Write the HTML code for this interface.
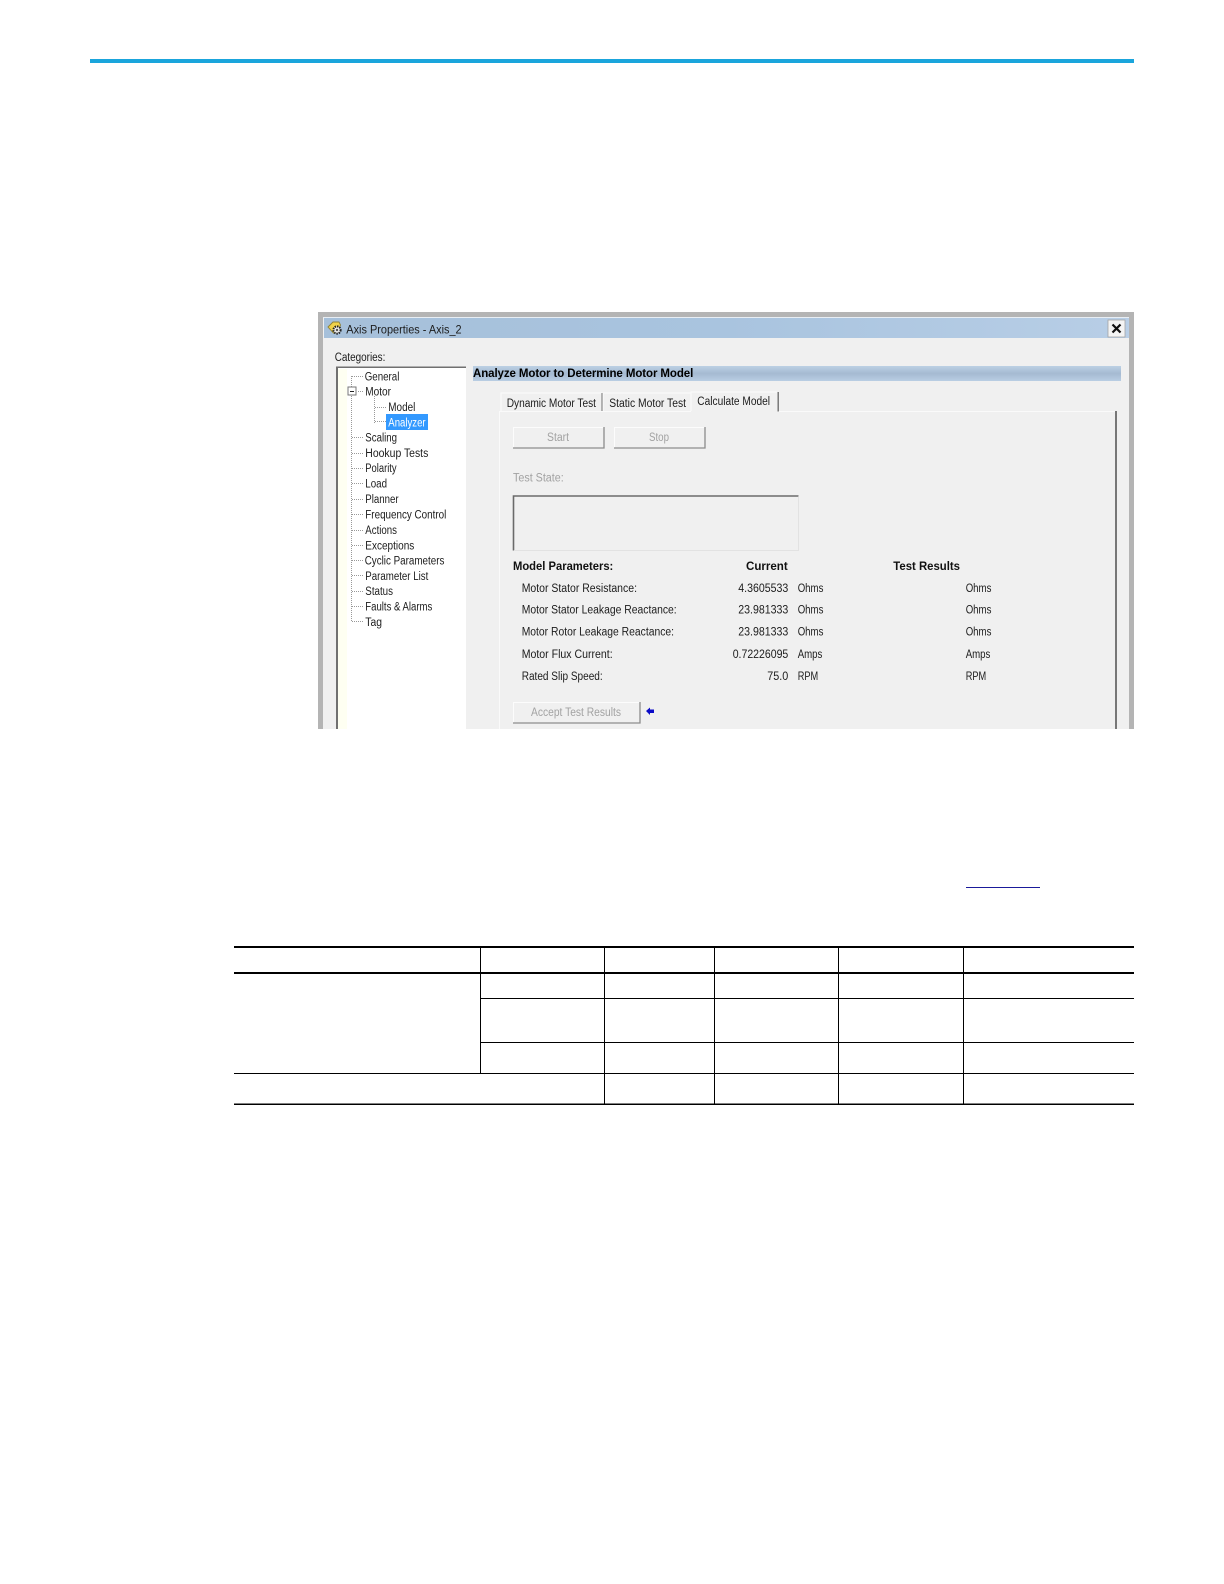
<!DOCTYPE html>
<html lang="en">
<head>
<meta charset="utf-8">
<title>Axis Properties</title>
<style>
html,body{margin:0;padding:0;background:#fff;}
body{width:1224px;height:1584px;overflow:hidden;position:relative;}
svg{position:absolute;left:0;top:0;}
text{font-family:"Liberation Sans",Arial,sans-serif;font-size:11.5px;fill:#1c1c1c;}
.b{font-weight:bold;fill:#111;}
.g{fill:#a2a2a2;}
</style>
</head>
<body>
<svg width="1224" height="1584" viewBox="0 0 1224 1584" xmlns="http://www.w3.org/2000/svg">
<defs>
<linearGradient id="tb" x1="0" x2="1" y1="0" y2="0">
<stop offset="0" stop-color="#a6c0da"/><stop offset="0.5" stop-color="#a9c4df"/><stop offset="1" stop-color="#b8cee6"/>
</linearGradient>
<linearGradient id="hb" x1="0" x2="0" y1="0" y2="1">
<stop offset="0" stop-color="#bcd0e4"/><stop offset="0.5" stop-color="#a5bad2"/><stop offset="1" stop-color="#b9cee3"/>
</linearGradient>
</defs>

<!-- top rule -->
<rect x="90" y="59" width="1044" height="4" fill="#1aa5dc"/>

<!-- dialog frame -->
<rect x="318" y="312" width="816" height="417" fill="#b4b4b4"/>
<rect x="323" y="317" width="806" height="412" fill="#f0f0f0"/>
<rect x="324" y="318" width="805" height="20" fill="url(#tb)"/>
<rect x="323" y="317" width="806" height="1" fill="#e8eef4"/>

<!-- title icon -->
<path d="M328 327l5-5h6l1.500 3-3 8h-4z" fill="#f0d24a" stroke="#8f8238" stroke-width="0.9"/>
<circle cx="337" cy="330" r="3.600" fill="#eeeeee" stroke="#222" stroke-width="2" stroke-dasharray="1.500 0.900"/>
<circle cx="337" cy="330" r="1.200" fill="#555"/>
<text x="346.300" y="333.500" style="font-size:12px" textLength="115.300" lengthAdjust="spacingAndGlyphs">Axis Properties - Axis_2</text>

<!-- close button -->
<rect x="1108" y="320" width="17" height="17" fill="#f4f4f4" stroke="#a4a4a4" stroke-width="0.8"/>
<path d="M1112.500 324.500l8 8M1120.500 324.500l-8 8" stroke="#111" stroke-width="2.200" fill="none"/>

<text x="334.700" y="361" textLength="50.700" lengthAdjust="spacingAndGlyphs">Categories:</text>

<!-- tree panel -->
<rect x="336" y="367" width="130" height="362" fill="#fff"/>
<rect x="338" y="369" width="9" height="360" fill="#fefff2"/>
<rect x="336" y="366.500" width="130" height="1.500" fill="#707070"/>
<rect x="336" y="367" width="2" height="362" fill="#707070"/>

<!-- tree lines -->
<g stroke="#999" stroke-width="1" stroke-dasharray="1 1" fill="none">
<path d="M351.500 376v246"/>
<path d="M352 376.500h12M358 391.500h6M352 437.500h12M352 453.500h12M352 468.500h12M352 483.500h12M352 499.500h12M352 514.500h12M352 530.500h12M352 545.500h12M352 560.500h12M352 575.500h12M352 591.500h12M352 606.500h12M352 621.500h12"/>
<path d="M374.500 396v27M375 407.500h11M375 421.500h11"/>
</g>
<rect x="348" y="387" width="8" height="8" fill="#fff" stroke="#777" stroke-width="1"/>
<path d="M350 391.500h4" stroke="#222" stroke-width="1"/>

<!-- tree labels -->
<text x="364.700" y="380.300" textLength="34.700" lengthAdjust="spacingAndGlyphs">General</text>
<text x="365.300" y="395.300" textLength="25.700" lengthAdjust="spacingAndGlyphs">Motor</text>
<text x="388.300" y="410.800" textLength="27" lengthAdjust="spacingAndGlyphs">Model</text>
<rect x="386" y="414" width="42" height="16" fill="#3399ff"/>
<text x="388.300" y="426.300" textLength="37.300" lengthAdjust="spacingAndGlyphs" style="fill:#fff">Analyzer</text>
<text x="365.300" y="441.300" textLength="31.700" lengthAdjust="spacingAndGlyphs">Scaling</text>
<text x="365.300" y="457" textLength="63" lengthAdjust="spacingAndGlyphs">Hookup Tests</text>
<text x="365.300" y="472" textLength="31.300" lengthAdjust="spacingAndGlyphs">Polarity</text>
<text x="365.300" y="487.300" textLength="21.700" lengthAdjust="spacingAndGlyphs">Load</text>
<text x="365.300" y="503" textLength="33.300" lengthAdjust="spacingAndGlyphs">Planner</text>
<text x="365.300" y="518.300" textLength="81" lengthAdjust="spacingAndGlyphs">Frequency Control</text>
<text x="365.300" y="534" textLength="31.700" lengthAdjust="spacingAndGlyphs">Actions</text>
<text x="365.300" y="549.300" textLength="49" lengthAdjust="spacingAndGlyphs">Exceptions</text>
<text x="364.700" y="564.300" textLength="79.700" lengthAdjust="spacingAndGlyphs">Cyclic Parameters</text>
<text x="365.300" y="580" textLength="63" lengthAdjust="spacingAndGlyphs">Parameter List</text>
<text x="365.300" y="595" textLength="27.700" lengthAdjust="spacingAndGlyphs">Status</text>
<text x="365.300" y="610.300" textLength="67" lengthAdjust="spacingAndGlyphs">Faults &amp; Alarms</text>
<text x="365.300" y="625.800" textLength="16.700" lengthAdjust="spacingAndGlyphs">Tag</text>

<!-- heading bar -->
<rect x="473" y="366" width="648" height="15" fill="url(#hb)"/>
<text class="b" x="473" y="377" textLength="220.300" lengthAdjust="spacing" style="fill:#000">Analyze Motor to Determine Motor Model</text>

<!-- tabs -->
<rect x="499" y="411" width="1" height="318" fill="#fafafa"/>
<rect x="499" y="411" width="617" height="1" fill="#fafafa"/>
<rect x="1115" y="411" width="2" height="318" fill="#777"/>
<path d="M501 411v-18h101" stroke="#fbfbfb" fill="none"/>
<rect x="601.500" y="393" width="1.200" height="18" fill="#707070"/>
<path d="M603 411v-18h88" stroke="#fbfbfb" fill="none"/>
<rect x="691" y="391.500" width="87" height="20.500" fill="#f0f0f0"/>
<path d="M691 411v-19h86" stroke="#fbfbfb" fill="none"/>
<rect x="777.500" y="392" width="1.400" height="19.500" fill="#707070"/>
<text x="506.700" y="407" textLength="89.300" lengthAdjust="spacingAndGlyphs">Dynamic Motor Test</text>
<text x="609.300" y="407" textLength="76.700" lengthAdjust="spacingAndGlyphs">Static Motor Test</text>
<text x="697.300" y="405" textLength="72.700" lengthAdjust="spacingAndGlyphs">Calculate Model</text>

<!-- buttons -->
<g fill="none">
<path d="M513.500 448v-20.500h90" stroke="#fcfcfc"/>
<path d="M513 448h91v-21" stroke="#8c8c8c" stroke-width="1.300"/>
<path d="M614.500 448v-20.500h90" stroke="#fcfcfc"/>
<path d="M614 448h91v-21" stroke="#8c8c8c" stroke-width="1.300"/>
<path d="M513.500 723v-20.500h126" stroke="#fcfcfc"/>
<path d="M513 723h127v-21" stroke="#8c8c8c" stroke-width="1.300"/>
</g>
<text class="g" x="547" y="441" textLength="22" lengthAdjust="spacingAndGlyphs">Start</text>
<text class="g" x="649" y="441" textLength="20" lengthAdjust="spacingAndGlyphs">Stop</text>
<text class="g" x="531" y="716" textLength="90" lengthAdjust="spacingAndGlyphs">Accept Test Results</text>
<path d="M646 711l4-3.500v2h4v3.500h-4v2z" fill="#0a0ac8"/>

<text class="g" x="513" y="481.500" textLength="50.700" lengthAdjust="spacingAndGlyphs">Test State:</text>

<!-- state box -->
<path d="M798.500 496h-285v54.500" stroke="#6a6a6a" stroke-width="1.600" fill="none"/>
<path d="M514 550.500h284.500v-54" stroke="#e2e2e2" stroke-width="1" fill="none"/>

<!-- parameter table -->
<text class="b" x="513" y="570" textLength="100.300" lengthAdjust="spacingAndGlyphs">Model Parameters:</text>
<text class="b" x="746" y="570" textLength="41.700" lengthAdjust="spacingAndGlyphs">Current</text>
<text class="b" x="893.300" y="570" textLength="66.700" lengthAdjust="spacingAndGlyphs">Test Results</text>

<text x="521.700" y="592" textLength="115.300" lengthAdjust="spacingAndGlyphs">Motor Stator Resistance:</text>
<text x="521.700" y="613.700" textLength="155" lengthAdjust="spacingAndGlyphs">Motor Stator Leakage Reactance:</text>
<text x="521.700" y="635.700" textLength="152.300" lengthAdjust="spacingAndGlyphs">Motor Rotor Leakage Reactance:</text>
<text x="521.700" y="658" textLength="91" lengthAdjust="spacingAndGlyphs">Motor Flux Current:</text>
<text x="521.700" y="680" textLength="81" lengthAdjust="spacingAndGlyphs">Rated Slip Speed:</text>

<text x="738.300" y="592" textLength="50" lengthAdjust="spacingAndGlyphs">4.3605533</text>
<text x="738.300" y="613.700" textLength="50" lengthAdjust="spacingAndGlyphs">23.981333</text>
<text x="738.300" y="635.700" textLength="50" lengthAdjust="spacingAndGlyphs">23.981333</text>
<text x="732.700" y="658" textLength="55.600" lengthAdjust="spacingAndGlyphs">0.72226095</text>
<text x="767.300" y="680" textLength="21" lengthAdjust="spacingAndGlyphs">75.0</text>

<text x="797.700" y="592" textLength="25.700" lengthAdjust="spacingAndGlyphs">Ohms</text>
<text x="797.700" y="613.700" textLength="25.700" lengthAdjust="spacingAndGlyphs">Ohms</text>
<text x="797.700" y="635.700" textLength="25.700" lengthAdjust="spacingAndGlyphs">Ohms</text>
<text x="797.700" y="658" textLength="24.700" lengthAdjust="spacingAndGlyphs">Amps</text>
<text x="797.700" y="680" textLength="20.500" lengthAdjust="spacingAndGlyphs">RPM</text>

<text x="965.700" y="592" textLength="25.700" lengthAdjust="spacingAndGlyphs">Ohms</text>
<text x="965.700" y="613.700" textLength="25.700" lengthAdjust="spacingAndGlyphs">Ohms</text>
<text x="965.700" y="635.700" textLength="25.700" lengthAdjust="spacingAndGlyphs">Ohms</text>
<text x="965.700" y="658" textLength="24.700" lengthAdjust="spacingAndGlyphs">Amps</text>
<text x="965.700" y="680" textLength="20.500" lengthAdjust="spacingAndGlyphs">RPM</text>

<!-- link underline -->
<rect x="966" y="887" width="74" height="1" fill="#1a1a9a"/>

<!-- data table rules -->
<g fill="#000">
<rect x="234" y="946" width="900" height="2"/>
<rect x="234" y="972" width="900" height="2"/>
<rect x="480" y="998" width="654" height="1"/>
<rect x="480" y="1042" width="654" height="1"/>
<rect x="234" y="1073" width="900" height="1"/>
<rect x="234" y="1103.500" width="900" height="1.500"/>
<rect x="480" y="947" width="1" height="126"/>
<rect x="604" y="947" width="1" height="157"/>
<rect x="714" y="947" width="1" height="157"/>
<rect x="838" y="947" width="1" height="157"/>
<rect x="963" y="947" width="1" height="157"/>
</g>
</svg>
</body>
</html>
